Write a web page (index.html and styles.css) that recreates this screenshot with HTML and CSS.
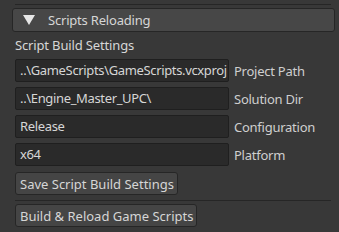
FILE: index.html
```html
<!DOCTYPE html>
<html lang="en">

<head>
  <meta charset="UTF-8">
  <meta name="viewport" content="width=device-width, initial-scale=1.0">
  <title>Scripts Reloading</title>
  <link rel="stylesheet" href="styles.css">
</head>

<body>
  <div class="panel">
    <div class="sep top"></div>
    <div class="header">
      <span class="arrow"></span>
      <span class="headerText">Scripts Reloading</span>
    </div>
    <div class="content">
      <p class="title">Script Build Settings</p>
      <div class="item">
        <div class="input">..\GameScripts\GameScripts.vcxproj</div>
        <label>Project Path</label>
      </div>
      <div class="item">
        <div class="input">..\Engine_Master_UPC\</div>
        <label>Solution Dir</label>
      </div>
      <div class="item">
        <div class="input">Release</div>
        <label>Configuration</label>
      </div>
      <div class="item">
        <div class="input">x64</div>
        <label>Platform</label>
      </div>
      <button class="btn save">Save Script Build Settings</button>
      <div class="sep mid"></div>
      <button class="btn">Build &amp; Reload Game Scripts</button>
    </div>
  </div>
</body>

</html>
```

FILE: styles.css
```css
* {
	margin: 0;
	padding: 0;
	box-sizing: border-box;
}

body {
	width: 339px;
	height: 232px;
	overflow: hidden;
	background: #383838;
	font-family: "Noto Sans", "Open Sans", sans-serif;
	font-size: 13px;
	color: #d6d6d6;
}

.panel {
	padding-top: 4px;
}

.sep {
	height: 1px;
	background: #262626;
	margin-left: 15px;
	width: 316px;
}

.header {
	display: flex;
	align-items: center;
	margin: 3px 0 0 12px;
	width: 323px;
	height: 24px;
	background: #474747;
	border: 1px solid #262626;
	border-radius: 3px;
}

.arrow {
	width: 0;
	height: 0;
	margin-left: 10px;
	border-left: 6.5px solid transparent;
	border-right: 6.5px solid transparent;
	border-top: 10px solid #e6e6e6;
}

.headerText {
	margin-left: 13px;
	letter-spacing: -0.2px;
}

.content {
	display: flex;
	flex-direction: column;
	align-items: flex-start;
	padding-left: 15px;
}

.title {
	height: 27px;
	line-height: 27px;
	letter-spacing: -0.15px;
}

.item {
	display: flex;
	align-items: center;
	margin-bottom: 5px;
}

.input {
	width: 214px;
	height: 23px;
	line-height: 21px;
	padding: 0 3px 0 4px;
	background: #2a2a2a;
	border: 1px solid #1f1f1f;
	border-radius: 2px;
	overflow: hidden;
	white-space: nowrap;
	letter-spacing: -0.35px;
}

.item label {
	margin-left: 5px;
	color: #cfcfcf;
	letter-spacing: -0.25px;
}

.btn {
	height: 23px;
	padding: 0 3px 0 4px;
	font: inherit;
	color: #d6d6d6;
	background: #454545;
	border: 1px solid #262626;
	border-radius: 3px;
}

.save {
	margin-top: 1px;
}

.sep.mid {
	margin: 5px 0 3px 0;
}
```
